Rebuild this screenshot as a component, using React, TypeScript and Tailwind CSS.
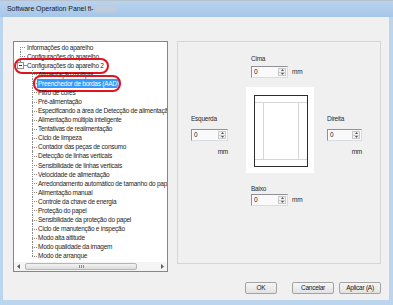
import React from 'react';

const level2 = [
  'Alimentação múltipla',
  'Preenchedor de bordas (AAD)',
  'Filtro de cores',
  'Pré-alimentação',
  'Especificando a área de Detecção de alimentação múltipla',
  'Alimentação múltipla inteligente',
  'Tentativas de realimentação',
  'Ciclo de limpeza',
  'Contador das peças de consumo',
  'Detecção de linhas verticais',
  'Sensibilidade de linhas verticais',
  'Velocidade de alimentação',
  'Arredondamento automático de tamanho do papel',
  'Alimentação manual',
  'Controle da chave de energia',
  'Proteção do papel',
  'Sensibilidade da proteção do papel',
  'Ciclo de manutenção e inspeção',
  'Modo alta altitude',
  'Modo qualidade da imagem',
  'Modo de arranque',
];

const font = "font-['Liberation_Sans',Arial,sans-serif]";

function Level1Row({ label, kind }: { label: string; kind: 'first' | 'mid' | 'last' }) {
  return (
    <div className="relative flex h-[9.08px] items-center">
      <div className="relative h-full w-[13px] shrink-0">
        {kind === 'first' && (
          <div className="absolute left-[6px] top-1/2 bottom-0 border-l border-dotted border-[#8a8a8a]" />
        )}
        {kind === 'mid' && (
          <div className="absolute left-[6px] top-0 bottom-0 border-l border-dotted border-[#8a8a8a]" />
        )}
        {kind === 'last' && (
          <div className="absolute left-[6px] top-0 h-[2px] border-l border-dotted border-[#8a8a8a]" />
        )}
        {kind !== 'last' ? (
          <div className="absolute left-[6px] top-1/2 w-[5px] border-t border-dotted border-[#8a8a8a]" />
        ) : (
          <>
            <div className="absolute left-[3px] top-[1px] flex h-[7px] w-[7px] items-center justify-center border border-[#8e8f8f] bg-white">
              <div className="h-px w-[3px] bg-[#333]" />
            </div>
            <div className="absolute left-[10px] top-1/2 w-[2px] border-t border-dotted border-[#8a8a8a]" />
          </>
        )}
      </div>
      <span className="whitespace-nowrap text-[#1e1e1e]">{label}</span>
      {kind === 'last' && (
        <div className="pointer-events-none absolute left-0 top-[-3px] h-[16px] w-[95px] rounded-[8px] border-2 border-[#e0141e]" />
      )}
    </div>
  );
}

function Level2Row({ label, last, selected }: { label: string; last: boolean; selected: boolean }) {
  return (
    <div className="relative flex h-[9.08px] items-center">
      <div className="relative h-full w-[23px] shrink-0">
        <div
          className={
            last
              ? 'absolute left-[18px] top-0 h-1/2 border-l border-dotted border-[#8a8a8a]'
              : 'absolute left-[18px] top-0 bottom-0 border-l border-dotted border-[#8a8a8a]'
          }
        />
        <div className="absolute left-[18px] top-1/2 w-[5px] border-t border-dotted border-[#8a8a8a]" />
      </div>
      {selected ? (
        <span className="whitespace-nowrap bg-[#3399ff] px-[1px] leading-[9px] text-white">{label}</span>
      ) : (
        <span className="whitespace-nowrap pl-[1px] text-[#1e1e1e]">{label}</span>
      )}
      {selected && (
        <div className="pointer-events-none absolute left-[19px] top-[-4px] h-[17px] w-[88px] rounded-[8px] border-2 border-[#e0141e]" />
      )}
    </div>
  );
}

function Tree() {
  return (
    <div className="flex h-[231px] w-[155px] shrink-0 flex-col border border-[#828790] bg-white">
      <div className="flex-1 overflow-hidden pt-[0.5px]">
        <Level1Row label="Informações do aparelho" kind="first" />
        <Level1Row label="Configurações do aparelho" kind="mid" />
        <Level1Row label="Configurações do aparelho 2" kind="last" />
        {level2.map((l, i) => (
          <Level2Row key={l} label={l} last={i === level2.length - 1} selected={i === 1} />
        ))}
      </div>
      <div className="flex h-[9px] items-center bg-[#f4f4f4]">
        <div className="flex w-[9px] items-center justify-center">
          <svg width="3" height="5" viewBox="0 0 3 5">
            <path d="M3 0 L0 2.5 L3 5 Z" fill="#606060" />
          </svg>
        </div>
        <div className="ml-[2px] flex h-[7px] w-[112px] items-center justify-center rounded-[2px] border border-[#b5b5b5] bg-gradient-to-b from-[#f3f3f3] to-[#dcdcdc]">
          <div className="flex gap-[1px]">
            <div className="h-[3px] w-px bg-[#8a8a8a]" />
            <div className="h-[3px] w-px bg-[#8a8a8a]" />
            <div className="h-[3px] w-px bg-[#8a8a8a]" />
          </div>
        </div>
        <div className="flex-1" />
        <div className="flex w-[9px] items-center justify-center">
          <svg width="3" height="5" viewBox="0 0 3 5">
            <path d="M0 0 L3 2.5 L0 5 Z" fill="#606060" />
          </svg>
        </div>
      </div>
    </div>
  );
}

function Spin({ w = 37 }: { w?: number }) {
  return (
    <div
      className={
        (w === 37 ? 'w-[37px]' : 'w-[35px]') +
        ' flex h-[12px] border border-[#8f9297] border-b-[#d8dde3] border-r-[#d8dde3] bg-[#fafafa]'
      }
    >
      <div className="flex-1 pl-[2px] leading-[10px] text-[#222]">0</div>
      <div className="my-[1px] mr-[1px] flex w-[8px] flex-col border border-[#c9c9c9] bg-[#f1f1f1]">
        <div className="flex flex-1 items-center justify-center border-b border-[#c9c9c9]">
          <svg width="3" height="2" viewBox="0 0 3 2">
            <path d="M0 2 L1.5 0 L3 2 Z" fill="#555" />
          </svg>
        </div>
        <div className="flex flex-1 items-center justify-center">
          <svg width="3" height="2" viewBox="0 0 3 2">
            <path d="M0 0 L1.5 2 L3 0 Z" fill="#555" />
          </svg>
        </div>
      </div>
    </div>
  );
}

function Label({ children }: { children: React.ReactNode }) {
  return <div className="h-[8px] leading-[8px] text-[#2a2a2a]">{children}</div>;
}

function Preview() {
  return (
    <div className="flex h-[86px] w-[68px] shrink-0 bg-white pb-[6px] pl-[8px] pr-[6px] pt-[8px]">
      <div className="flex flex-1 flex-col border border-[#2c2c2c] border-b-[1.5px]">
        <div className="h-[7px] border-b border-[#d6d6d6]" />
        <div className="flex flex-1">
          <div className="w-[9px] border-r border-[#d6d6d6]" />
          <div className="flex-1" />
          <div className="w-[9px] border-l border-[#d6d6d6]" />
        </div>
        <div className="h-[7px] border-t border-[#d6d6d6]" />
      </div>
    </div>
  );
}

function Panel() {
  return (
    <div className="flex h-[223px] w-[204px] flex-col border border-[#d5d5d5] pt-[13px]">
      <div className="ml-[73px] flex flex-col">
        <Label>Cima</Label>
        <div className="mt-[3px] flex items-center">
          <Spin />
          <div className="ml-[4px] leading-[8px] text-[#2a2a2a]">mm</div>
        </div>
      </div>
      <div className="mt-[9px] flex">
        <div className="ml-[13px] mt-[28px] flex w-[37px] flex-col">
          <Label>Esquerda</Label>
          <div className="mt-[6px]">
            <Spin />
          </div>
          <div className="mt-[7px] self-end leading-[8px] text-[#2a2a2a]">mm</div>
        </div>
        <div className="ml-[18px]">
          <Preview />
        </div>
        <div className="ml-[13px] mt-[28px] flex w-[35px] flex-col">
          <Label>Direita</Label>
          <div className="mt-[6px]">
            <Spin w={35} />
          </div>
          <div className="mt-[7px] self-end leading-[8px] text-[#2a2a2a]">mm</div>
        </div>
      </div>
      <div className="ml-[73px] mt-[12px] flex flex-col">
        <Label>Baixo</Label>
        <div className="mt-[1px] flex items-center">
          <Spin />
          <div className="ml-[4px] leading-[8px] text-[#2a2a2a]">mm</div>
        </div>
      </div>
    </div>
  );
}

function Btn({ children, w }: { children: React.ReactNode; w: string }) {
  return (
    <div
      className={
        w +
        ' flex h-[12px] items-center justify-center rounded-[2px] border border-[#a3a3a3] bg-gradient-to-b from-[#f6f6f6] to-[#e2e2e2] leading-[8px] text-[#222]'
      }
    >
      {children}
    </div>
  );
}

export default function App() {
  return (
    <div
      className={
        font +
        ' flex h-[305px] w-[393px] flex-col overflow-hidden bg-[#bcd5ee] text-[6.5px] leading-[9px] tracking-[-0.25px]'
      }
    >
      <div className="flex h-[17px] shrink-0 items-center border-t border-[#b9c3cf] bg-gradient-to-b from-[#b9d3ee] to-[#a6c6e8] pl-[7px]">
        <span className="text-[7px] leading-[8px] tracking-[-0.05px] text-[#1a1a1a]">Software Operation Panel fi-</span>
        <span className="ml-[1px] h-[6px] w-[22px] rounded-[2px] bg-[#c3ccd8] blur-[1px]" />
      </div>
      <div className="flex flex-1">
        <div className="w-[3px] shrink-0" />
        <div className="flex flex-1 bg-[#f0f0f0] pl-[10px] pr-[8px] pt-[24px]">
          <Tree />
          <div className="ml-[9px] flex flex-col">
            <Panel />
            <div className="mt-[18px] flex justify-end">
              <Btn w="w-[32px]">OK</Btn>
              <div className="ml-[15px]">
                <Btn w="w-[42px]">Cancelar</Btn>
              </div>
              <div className="ml-[5px]">
                <Btn w="w-[42px]">Aplicar (A)</Btn>
              </div>
            </div>
          </div>
        </div>
        <div className="w-[4px] shrink-0" />
      </div>
      <div className="h-[5px] shrink-0" />
    </div>
  );
}
